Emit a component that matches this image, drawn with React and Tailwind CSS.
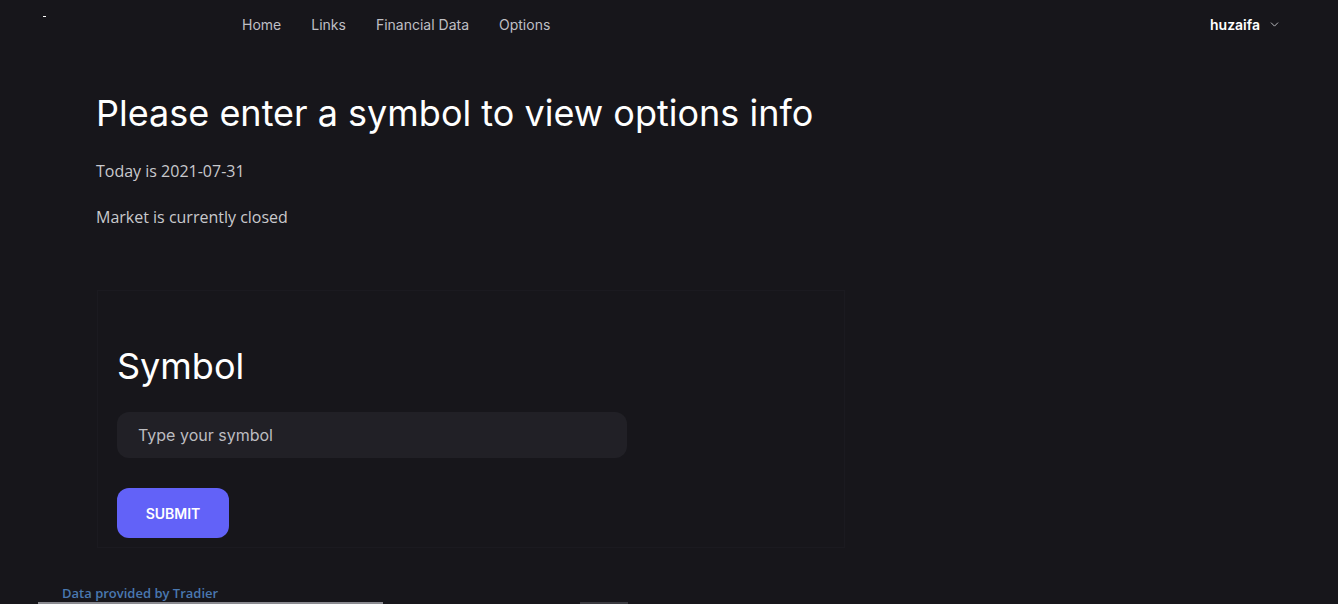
import React from 'react';
import { ChevronDown } from 'lucide-react';

function NavBar() {
  return (
    <nav className="h-12 flex items-center relative font-['Inter',sans-serif]">
      {/* broken logo */}
      <span className="absolute left-[43px] top-[16px] w-[3px] h-[1px] bg-white" />
      <div className="flex items-center gap-[30px] ml-[242px] text-[14px] text-[#bfbfc4]">
        <a>Home</a>
        <a>Links</a>
        <a>Financial Data</a>
        <a>Options</a>
      </div>
      <div className="ml-auto mr-[57px] flex items-center gap-[8px] text-[14px] font-semibold text-white">
        huzaifa
        <ChevronDown size={13} strokeWidth={1.75} className="text-[#bfbfc4]" />
      </div>
    </nav>
  );
}

export default function App() {
  return (
    <div className="w-[1338px] h-[604px] overflow-hidden bg-[#17161b] relative">
      <NavBar />

      <main className="px-[96px] pt-[41px]">
        <h1 className="text-[36px] leading-[48px] text-white font-['Inter',sans-serif] font-normal">
          Please enter a symbol to view options info
        </h1>
        <p className="mt-[22px] text-[16px] leading-[24px] text-[#c9c9cd] font-['Open_Sans',sans-serif]">
          Today is 2021-07-31
        </p>
        <p className="mt-[22px] text-[16px] leading-[24px] text-[#c9c9cd] font-['Open_Sans',sans-serif]">
          Market is currently closed
        </p>

        {/* Symbol card */}
        <section className="mt-[61px] ml-[1px] w-[748px] h-[258px] border border-[#1b1a20] px-[19px] pt-[51px] font-['Inter',sans-serif]">
          <h2 className="text-[36px] leading-[48px] text-white font-normal">Symbol</h2>
          <input
            className="mt-[22px] w-[510px] h-[46px] rounded-xl bg-[#212026] px-[21px] text-[16px] text-white placeholder:text-[#bcbcc0] outline-none"
            placeholder="Type your symbol"
          />
          <button className="mt-[30px] block w-[112px] h-[50px] rounded-xl bg-[#6262f8] text-white text-[14px] font-semibold">
            SUBMIT
          </button>
        </section>
      </main>

      <footer className="absolute left-[62px] top-[584px] text-[13px] font-semibold text-[#4a78b0] font-['Open_Sans',sans-serif]">
        Data provided by Tradier
      </footer>
      <div className="absolute left-[38px] bottom-0 w-[345px] h-[2px] bg-[#8a8a90]" />
      <div className="absolute left-[580px] bottom-0 w-[48px] h-[2px] bg-[#3a3a40]" />
    </div>
  );
}
